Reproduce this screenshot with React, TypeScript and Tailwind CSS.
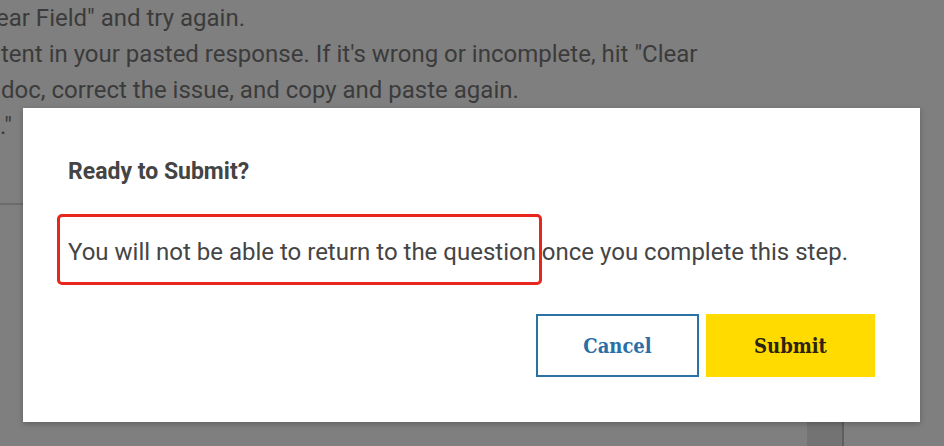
import React from "react";

export default function App() {
  const bgText = "text-[24px] leading-[36px] text-[#3b3b3b] whitespace-nowrap";
  return (
    <div
      className="relative w-[944px] h-[446px] overflow-hidden bg-[#7f7f7f]"
      style={{ fontFamily: "Roboto, 'Noto Sans', sans-serif" }}
    >
      {/* background page */}
      <div className="flex flex-col">
        <div className={`${bgText} ml-[-4px]`}>ear Field" and try again.</div>
        <div className={`${bgText} ml-[1px]`}>
          tent in your pasted response. If it's wrong or incomplete, hit "Clear
        </div>
        <div className={`${bgText} ml-[1px]`}>doc, correct the issue, and copy and paste again.</div>
        <div className={`${bgText} ml-[0px]`}>."</div>
        <div className="mt-[59px] h-[2px] w-[60px] bg-[#6c6c6c]" />
      </div>
      <div className="flex h-[100px] ml-[807px] mt-[150px]">
        <div className="w-[35px] h-full bg-[#737373]" />
        <div className="w-[2px] h-full bg-[#5e5e5e]" />
      </div>

      {/* modal */}
      <div className="absolute left-[23px] top-[108px] w-[897px] h-[314px] bg-white shadow-[0_2px_6px_rgba(0,0,0,0.25)] flex flex-col px-[45px]">
        <div className="pt-[49px] text-[23px] leading-[30px] font-bold text-[#444444]">
          Ready to Submit?
        </div>
        <div className="mt-[49px] text-[24px] leading-[32px] text-[#454545] whitespace-nowrap">
          You will not be able to return to the question once you complete this step.
        </div>
        <div className="mt-[46px] flex justify-end gap-[7px]">
          <button
            className="w-[163px] h-[63px] border-2 border-[#2a72a3] bg-white text-[#2a6ea6] text-[20px] font-bold flex items-center justify-center"
            style={{ fontFamily: "'DejaVu Serif Condensed', 'DejaVu Serif', serif", fontStretch: "condensed" }}
          >
            Cancel
          </button>
          <button
            className="w-[169px] h-[63px] bg-[#ffdb00] text-[#2b2410] text-[20px] font-bold flex items-center justify-center"
            style={{ fontFamily: "'DejaVu Serif Condensed', 'DejaVu Serif', serif", fontStretch: "condensed" }}
          >
            Submit
          </button>
        </div>
        {/* annotation */}
        <div className="absolute left-[34px] top-[106px] w-[485px] h-[71px] border-[3px] border-[#e8261d] rounded-[5px]" />
      </div>
    </div>
  );
}
